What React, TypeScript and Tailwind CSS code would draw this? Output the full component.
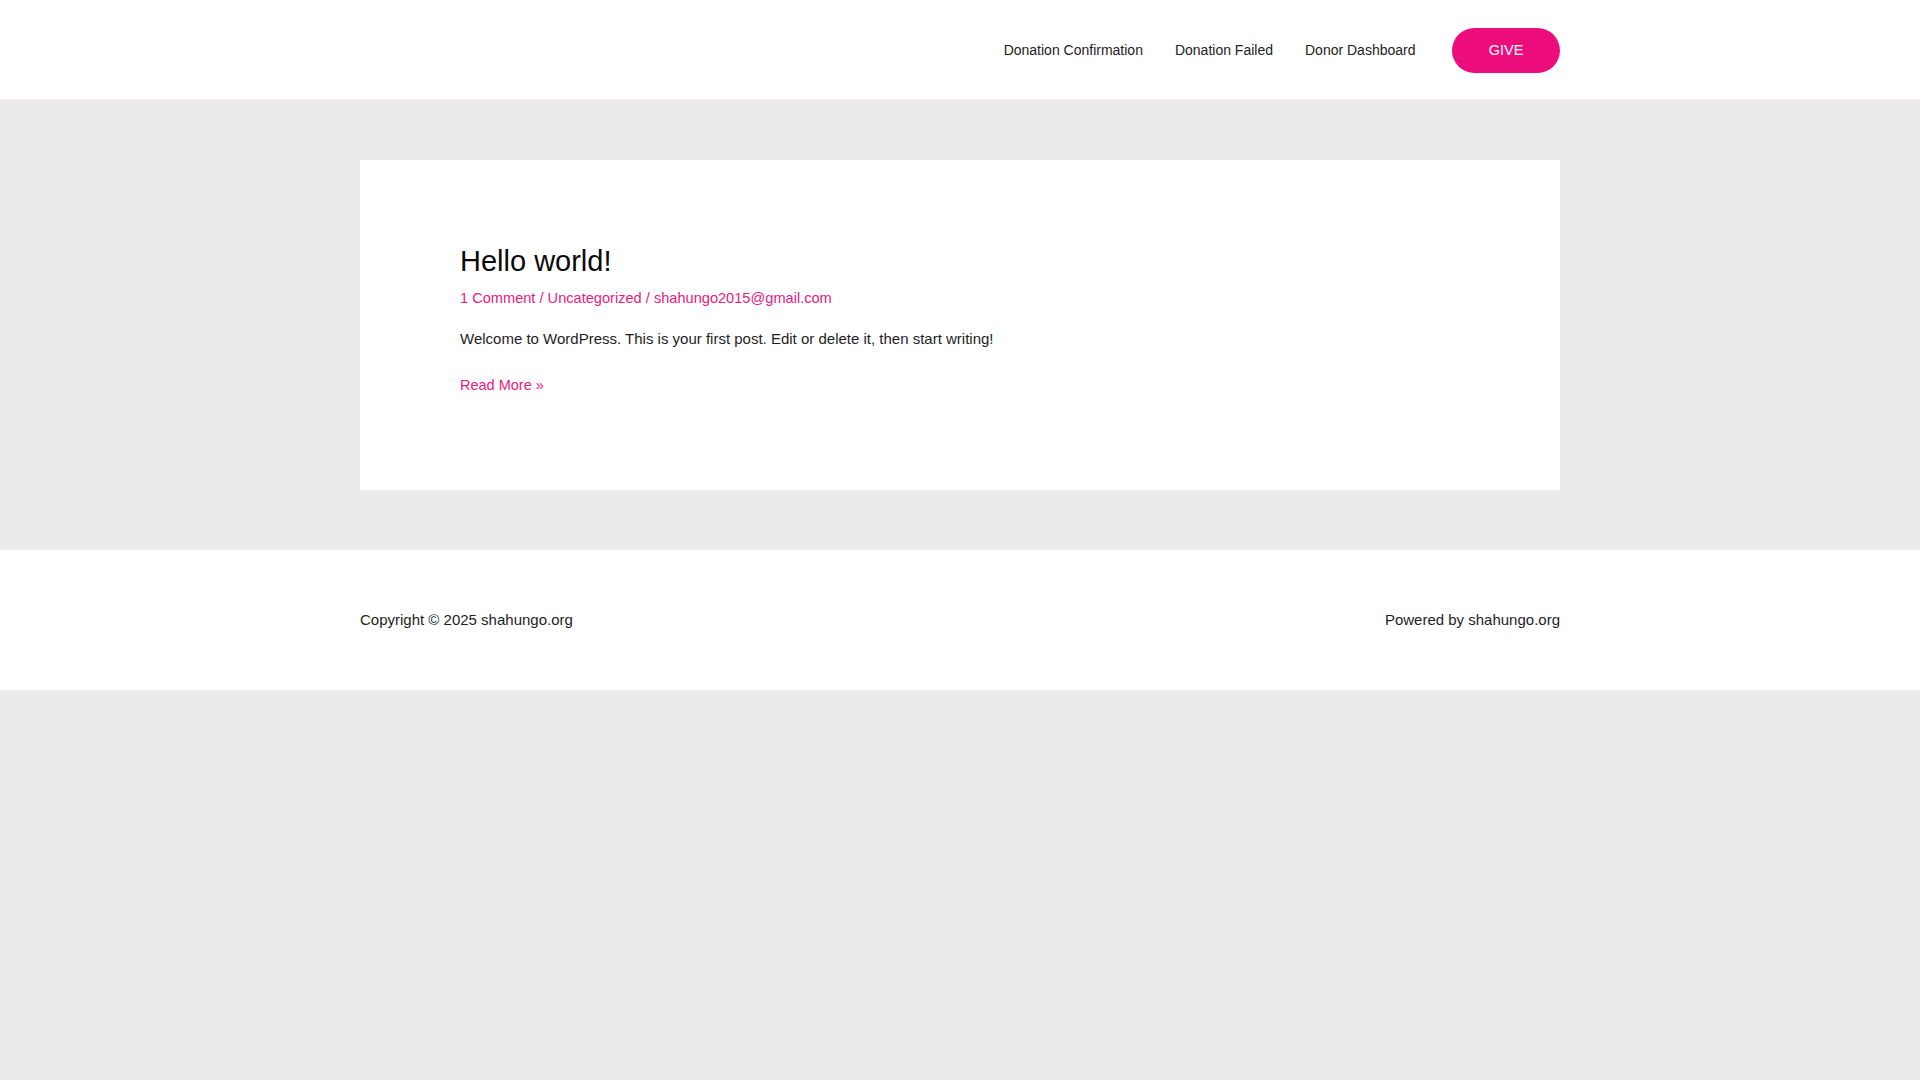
import React from 'react';

const navLinks = ['Donation Confirmation', 'Donation Failed', 'Donor Dashboard'];

const App: React.FC = () => {
    return (
        <div className="min-h-screen bg-[#ebebeb] font-['Liberation_Sans',Arial,sans-serif] text-[#1e1e1e]">
            {/* Header */}
            <header className="h-[100px] bg-white border-b border-[#fbe6f0]">
                <div className="mx-auto flex h-full w-[1200px] items-center justify-end pt-[1px]">
                    <nav className="flex items-center gap-[32px]">
                        {navLinks.map((link) => (
                            <a key={link} href="#" className="text-[14px] leading-[20px] text-[#222]">
                                {link}
                            </a>
                        ))}
                    </nav>
                    <a
                        href="#"
                        className="ml-[36.5px] flex h-[45px] w-[108px] items-center justify-center rounded-full bg-[#ec0c7b] pt-[2px] text-[14.5px] text-white"
                    >
                        GIVE
                    </a>
                </div>
            </header>

            {/* Posts */}
            <main className="pt-[60px] pb-[60px]">
                <article className="mx-auto h-[330px] w-[1200px] bg-white px-[100px] pt-[80px]">
                    <h2 className="text-[29px] leading-[43.5px] font-normal text-[#0a0a0a]">Hello world!</h2>
                    <div className="mt-[4px] text-[14.6px] leading-[21.6px] text-[#ea1a7e]">
                        <a href="#">1 Comment</a> / <a href="#">Uncategorized</a> /{' '}
                        <a href="#">shahungo2015@gmail.com</a>
                    </div>
                    <p className="mt-[17.7px] text-[15px] leading-[24px]">
                        Welcome to WordPress. This is your first post. Edit or delete it, then start writing!
                    </p>
                    <p className="mt-[24.4px] text-[14.5px] leading-[21.6px]">
                        <a href="#" className="text-[#ea1a7e]">
                            Read More »
                        </a>
                    </p>
                </article>
            </main>

            {/* Footer */}
            <footer className="bg-white py-[58px]">
                <div className="mx-auto flex w-[1200px] items-center justify-between text-[15px] leading-[24px] text-[#1e1e1e]">
                    <p>Copyright © 2025 shahungo.org</p>
                    <p>Powered by shahungo.org</p>
                </div>
            </footer>
        </div>
    );
};

export default App;
